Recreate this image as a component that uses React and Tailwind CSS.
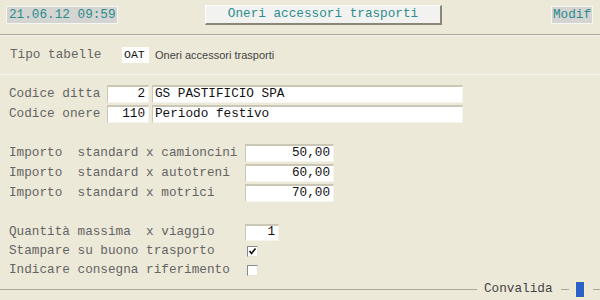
import React from "react";

const mono = { fontFamily: '"Liberation Mono", "Courier New", monospace' };

function Box({ className = "", children, align = "right" }) {
  return (
    <div
      className={`bg-white border-t-2 border-l border-[#cbc7b7] border-r border-b border-r-[#f6f4ec] border-b-[#f6f4ec] flex items-center text-[#111] ${
        align === "right" ? "justify-end pr-[3px]" : "justify-start pl-[2px]"
      } ${className}`}
    >
      {children}
    </div>
  );
}

function Check({ checked }) {
  return (
    <div className="w-[11px] h-[11px] bg-white border-t border-l border-[#8a8a8a] border-r border-b border-r-[#e6e3d6] border-b-[#e6e3d6] flex items-center justify-center">
      {checked && (
        <svg width="9" height="9" viewBox="0 0 9 9">
          <path d="M1.5 4 L3.5 6.5 L7.5 1.5" stroke="#111" strokeWidth="1.6" fill="none" />
        </svg>
      )}
    </div>
  );
}

export default function App() {
  return (
    <div
      className="w-[600px] h-[300px] bg-[#ece9d8] overflow-hidden flex flex-col text-[12.7px] leading-none text-[#646464]"
      style={mono}
    >
      {/* header */}
      <div className="h-[35px] flex items-start border-b border-[#aca899]">
        <div className="ml-[6px] mt-[6px] w-[112px] h-[18px] bg-[#d4d4d2] border border-[#f6f6f2] flex items-center pl-[2px] text-[#2b8c8c]">
          21.06.12 09:59
        </div>
        <div className="ml-[87px] mt-[5px] w-[237px] h-[20px] bg-[#f2f2f0] border-t border-l border-white border-r-2 border-b-2 border-r-[#8a8777] border-b-[#8a8777] flex items-center justify-center text-[#2b8c8c]">
          Oneri accessori trasporti
        </div>
        <div className="ml-auto mr-[7px] mt-[6px] w-[42px] h-[18px] bg-[#d4d4d2] border border-[#f6f6f2] flex items-center pl-px text-[#2b8c8c]">
          Modif
        </div>
      </div>
      <div className="h-px bg-[#f4f2ea]" />

      {/* tipo tabelle */}
      <div className="h-[39px] flex items-center border-b border-[#f6f4ee]">
        <div className="w-[122px] pl-[10px]">Tipo tabelle</div>
        <div className="w-[27px] h-[16px] bg-white flex items-center pl-[2px] text-[#111] text-[11.5px]">
          OAT
        </div>
        <div
          className="ml-[6px] text-[11px] text-[#444]"
          style={{ fontFamily: '"Liberation Sans", Arial, sans-serif' }}
        >
          Oneri accessori trasporti
        </div>
      </div>

      {/* codici */}
      <div className="mt-[10px] flex flex-col gap-[2px]">
        <div className="flex items-center h-[18px]">
          <div className="w-[107px] pl-[9px]">Codice ditta</div>
          <Box className="w-[42px] h-[18px]">2</Box>
          <Box className="ml-[3px] w-[311px] h-[18px]" align="left">GS PASTIFICIO SPA</Box>
        </div>
        <div className="flex items-center h-[18px]">
          <div className="w-[107px] pl-[9px]">Codice onere</div>
          <Box className="w-[42px] h-[18px]">110</Box>
          <Box className="ml-[3px] w-[311px] h-[18px]" align="left">Periodo festivo</Box>
        </div>
      </div>

      {/* importi */}
      <div className="mt-[21px] flex flex-col gap-[2px]">
        {[
          ["camioncini", "50,00"],
          ["autotreni", "60,00"],
          ["motrici", "70,00"],
        ].map(([k, v]) => (
          <div key={k} className="flex items-center h-[18px]">
            <div className="w-[245px] pl-[9px] whitespace-pre">{`Importo  standard x ${k}`}</div>
            <Box className="w-[89px] h-[18px]">{v}</Box>
          </div>
        ))}
      </div>

      {/* quantita */}
      <div className="mt-[21px] flex items-center h-[18px]">
        <div className="w-[245px] pl-[9px] whitespace-pre">{"Quantità massima  x viaggio"}</div>
        <Box className="w-[34px] h-[17px]">1</Box>
      </div>
      <div className="mt-[2px] flex items-center h-[17px]">
        <div className="w-[247px] pl-[9px]">Stampare su buono trasporto</div>
        <Check checked />
      </div>
      <div className="mt-[2px] flex items-center h-[17px]">
        <div className="w-[247px] pl-[9px]">Indicare consegna riferimento</div>
        <Check />
      </div>

      {/* footer */}
      <div className="mt-auto mb-[2px] h-[17px] flex items-center">
        <div className="w-[477px] h-px bg-[#aca899]" />
        <div className="ml-[7px] text-[#444]">Convalida</div>
        <div className="ml-[8px] w-[8px] h-px bg-[#aca899]" />
        <div className="ml-[6px] w-[10px] h-[17px] bg-[#2b62c8] border border-[#f6efc6]" />
        <div className="ml-[8px] flex-1 h-px bg-[#aca899]" />
      </div>
    </div>
  );
}
